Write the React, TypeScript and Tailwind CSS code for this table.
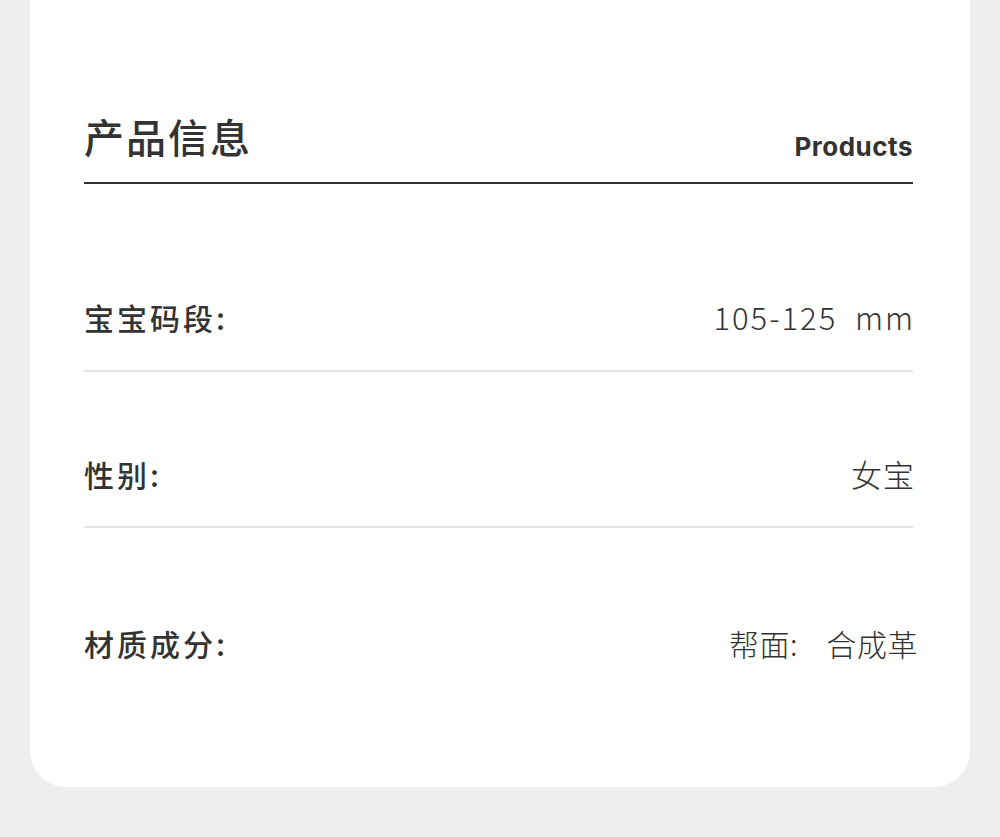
import React from "react";

const rows = [
  {
    label: "宝宝码段:",
    value: "105-125  mm",
    pad: "pt-[113px] pb-[33px]",
    valueCls: "text-[31px] tracking-[2px] -mr-[2px]",
  },
  {
    label: "性别:",
    value: "女宝",
    pad: "pt-[82px] pb-[32px]",
    valueCls: "text-[31px] tracking-[1px] -mr-[2px]",
  },
  {
    label: "材质成分:",
    value: "帮面:    合成革",
    pad: "pt-[95px] pb-[124px]",
    valueCls: "text-[30px] tracking-[0.5px] -mr-[5px]",
  },
];

const cjk = "font-['Noto_Sans_CJK_SC','Noto_Sans',sans-serif]";

const App: React.FC = () => {
  return (
    <div className="min-h-[837px] w-full bg-[#eeeeee]">
      <div className="mx-[30px] rounded-b-[36px] bg-white pl-[54px] pr-[57px]">
        {/* Header */}
        <div className="flex items-end justify-between border-b-2 border-[#333333] pb-[20px] pt-[112px]">
          <div className={`${cjk} mb-[2px] text-[40px] font-medium leading-[48px] tracking-[2px] text-[#333333]`}>
            产品信息
          </div>
          <div className="font-['Inter','Liberation_Sans',sans-serif] text-[26px] font-bold leading-[30px] tracking-[0.5px] text-[#333333]">
            Products
          </div>
        </div>

        {/* Rows */}
        {rows.map((row, idx) => (
          <div
            key={row.label}
            className={`flex items-center justify-between ${row.pad} ${
              idx < rows.length - 1 ? "border-b-2 border-[#e3e3e3]" : ""
            }`}
          >
            <span className={`${cjk} text-[30px] font-medium leading-[40px] tracking-[3px] text-[#333333]`}>
              {row.label}
            </span>
            <span
              className={`${cjk} ${row.valueCls} whitespace-pre font-light leading-[40px] text-[#333333]`}
            >
              {row.value}
            </span>
          </div>
        ))}
      </div>
    </div>
  );
};

export default App;
